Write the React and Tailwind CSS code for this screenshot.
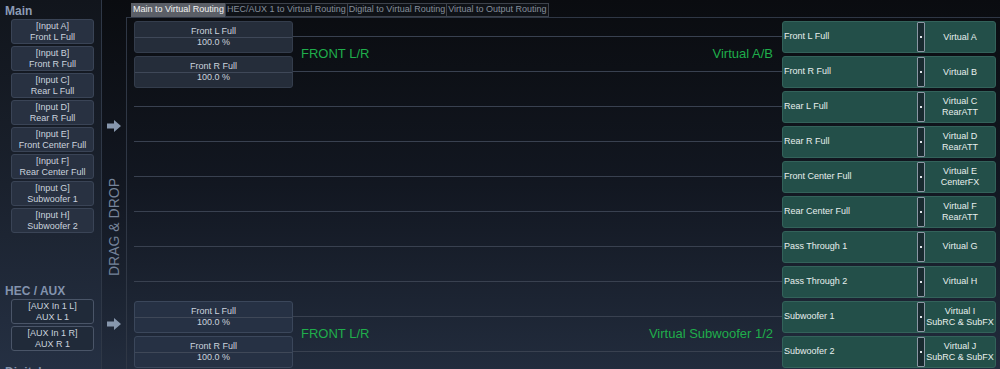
import React from "react";

const inputs = [
  ["[Input A]", "Front L Full"],
  ["[Input B]", "Front R Full"],
  ["[Input C]", "Rear L Full"],
  ["[Input D]", "Rear R Full"],
  ["[Input E]", "Front Center Full"],
  ["[Input F]", "Rear Center Full"],
  ["[Input G]", "Subwoofer 1"],
  ["[Input H]", "Subwoofer 2"],
];

const aux = [
  ["[AUX In 1 L]", "AUX L 1"],
  ["[AUX In 1 R]", "AUX R 1"],
];

const outs = [
  ["Front L Full", ["Virtual A"]],
  ["Front R Full", ["Virtual B"]],
  ["Rear L Full", ["Virtual C", "RearATT"]],
  ["Rear R Full", ["Virtual D", "RearATT"]],
  ["Front Center Full", ["Virtual E", "CenterFX"]],
  ["Rear Center Full", ["Virtual F", "RearATT"]],
  ["Pass Through 1", ["Virtual G"]],
  ["Pass Through 2", ["Virtual H"]],
  ["Subwoofer 1", ["Virtual I", "SubRC & SubFX"]],
  ["Subwoofer 2", ["Virtual J", "SubRC & SubFX"]],
];

function Arrow() {
  return (
    <svg width="14" height="12" viewBox="0 0 14 12">
      <path d="M0 3.5 H7 V0 L14 6 L7 12 V8.5 H0 Z" fill="#8797ad" />
    </svg>
  );
}

function InputBtn({ a, b, outline }) {
  return (
    <div
      className={
        "h-[25px] rounded-[3px] border flex flex-col items-center justify-center text-[9px] leading-[11px] text-[#cbd3de] " +
        (outline
          ? "border-[#4a5568] bg-[#202a39]"
          : "border-[#3a4456] bg-[#283141]")
      }
    >
      <div>{a}</div>
      <div>{b}</div>
    </div>
  );
}

function SourceBtn({ name, bottom }) {
  return (
    <div
      className={
        "h-[32px] rounded-[3px] border flex flex-col text-[9px] leading-[11px] text-[#ccd3dd] " +
        (bottom
          ? "border-[#3b475b] bg-[#263144]"
          : "border-[#343d4c] bg-[#252d3a]")
      }
    >
      <div className="h-[15px] flex items-end justify-center">{name}</div>
      <div className="h-px bg-[#3f4858]" />
      <div className="h-[15px] flex items-start justify-center">100.0 %</div>
    </div>
  );
}

function OutBtn({ label, virt }) {
  return (
    <div className="h-[32px] flex rounded-[3px] border border-[#33625a] bg-[#234f49] text-[9px] text-[#e8efee]">
      <div className="flex-1 flex items-center pl-[1px]">{label}</div>
      <div className="w-[8px] border border-[#8a96a3] bg-[#182a2f] rounded-[1px] flex items-center justify-center">
        <div className="w-[2px] h-[2px] bg-[#e0e6ea]" />
      </div>
      <div className="w-[70px] flex flex-col items-center justify-center leading-[11px] text-center">
        {virt.map((v) => (
          <div key={v}>{v}</div>
        ))}
      </div>
    </div>
  );
}

function Line() {
  return <div className="h-px bg-[#394150]" />;
}

function PairGroup({ left, rightLabel, items, bottom }) {
  return (
    <div className="h-[70px] flex">
      <div className="w-[159px] flex flex-col gap-[3px] pt-[2px]">
        <SourceBtn name="Front L Full" bottom={bottom} />
        <SourceBtn name="Front R Full" bottom={bottom} />
      </div>
      <div className="flex-1 flex flex-col">
        <div className="h-[17px]" />
        <Line />
        <div className="flex-1 flex items-center justify-between pl-[8px] pr-[9px] text-[13px] text-[#1fae4b]">
          <span>{left}</span>
          <span>{rightLabel}</span>
        </div>
        <Line />
        <div className="h-[17px]" />
      </div>
      <div className="w-[214px] flex flex-col gap-[3px] pt-[2px]">
        {items.map(([l, v]) => (
          <OutBtn key={l} label={l} virt={v} />
        ))}
      </div>
    </div>
  );
}

function Row({ item }) {
  return (
    <div className="h-[35px] flex items-center">
      <div className="flex-1">
        <Line />
      </div>
      <div className="w-[214px]">
        <OutBtn label={item[0]} virt={item[1]} />
      </div>
    </div>
  );
}

const tabs = [
  "Main to Virtual Routing",
  "HEC/AUX 1 to Virtual Routing",
  "Digital to Virtual Routing",
  "Virtual to Output Routing",
];

export default function App() {
  return (
    <div className="w-[1000px] h-[369px] overflow-hidden flex bg-gradient-to-b from-[#0a0c10] via-[#121721] to-[#222c3d] font-['Liberation_Sans',Arial,sans-serif]">
      <aside className="w-[102px] shrink-0 border-r border-[#2f3847] bg-gradient-to-b from-[#11151c] via-[#1a212d] to-[#253043] pl-[11px] pr-[7px] flex flex-col">
        <div className="pt-[4px] h-[19px] -ml-[6px] text-[12px] leading-[15px] font-bold text-[#8c9bb5]">
          Main
        </div>
        <div className="flex flex-col gap-[2px]">
          {inputs.map(([a, b]) => (
            <InputBtn key={a} a={a} b={b} />
          ))}
        </div>
        <div className="mt-[51px] h-[15px] -ml-[6px] text-[12px] leading-[15px] font-bold text-[#8393ad]">
          HEC / AUX
        </div>
        <div className="flex flex-col gap-[2px]">
          {aux.map(([a, b]) => (
            <InputBtn key={a} a={a} b={b} outline />
          ))}
        </div>
        <div className="mt-[14px] h-[15px] shrink-0 -ml-[6px] text-[12px] leading-[15px] font-bold text-[#8393ad]">
          Digital
        </div>
      </aside>
      <div className="w-[24px] shrink-0 flex flex-col items-center pt-[120px]">
        <Arrow />
        <div className="mt-[45px] h-[100px] [writing-mode:vertical-rl] rotate-180 text-[14px] leading-[14px] text-[#76849a] whitespace-nowrap flex items-center justify-center">
          DRAG &amp; DROP
        </div>
        <div className="mt-[41px]">
          <Arrow />
        </div>
      </div>
      <main className="flex-1 flex flex-col">
        <div className="h-[17px] pt-[3px] pl-[5px] flex items-start">
          {tabs.map((t, i) => (
            <div
              key={t}
              className={
                "h-[14px] px-[1px] flex items-center text-[9px] whitespace-nowrap border " +
                (i === 0
                  ? "bg-[#5b5f67] border-[#5b5f67] text-[#f2f2f2]"
                  : "bg-[#0f1217] border-[#3d424b] text-[#858e9b] -ml-px")
              }
            >
              {t}
            </div>
          ))}
        </div>
        <div className="flex-1 border-t border-l border-[#2f3745] pl-[7px] pr-[4px] pt-px flex flex-col">
          <PairGroup
            left="FRONT L/R"
            rightLabel="Virtual A/B"
            items={outs.slice(0, 2)}
          />
          {outs.slice(2, 8).map((o) => (
            <Row key={o[0]} item={o} />
          ))}
          <PairGroup
            left="FRONT L/R"
            rightLabel="Virtual Subwoofer 1/2"
            items={outs.slice(8, 10)}
            bottom
          />
        </div>
      </main>
    </div>
  );
}
